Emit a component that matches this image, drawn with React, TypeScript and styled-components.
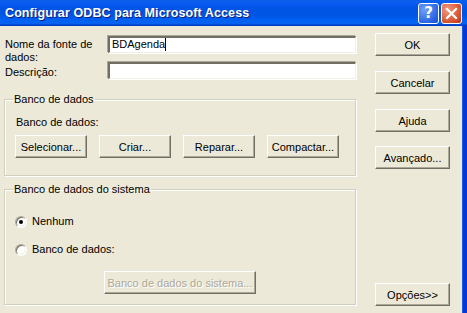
import React from "react";
import styled, { createGlobalStyle, css } from "styled-components";

const Global = createGlobalStyle`
  html, body { margin: 0; padding: 0; background: #ECE9D8; }
  body { font-family: "Liberation Sans", Arial, sans-serif; font-size: 11px; color: #000; }
  * { box-sizing: border-box; }
`;

const Window = styled.div`
  width: 467px;
  height: 313px;
  display: flex;
  flex-direction: column;
  overflow: hidden;
  background: #ECE9D8;
`;

const TitleBar = styled.div`
  height: 26px;
  flex: none;
  display: flex;
  align-items: center;
  padding: 0 5px 0 5px;
  background: linear-gradient(
    to bottom,
    #0A61E8 0%,
    #0A5CF0 10%,
    #0155E6 30%,
    #0054E3 55%,
    #0062F4 80%,
    #0763EE 90%,
    #0046D4 96%,
    #0036B8 100%
  );
`;

const Title = styled.div`
  flex: 1;
  color: #fff;
  font-family: "Liberation Sans", Arial, sans-serif;
  font-weight: bold;
  font-size: 12.5px;
  letter-spacing: 0.1px;
  text-shadow: 1px 1px 0 #0A1E80;
  white-space: nowrap;
`;

const CaptionButton = styled.div<{ $kind: "help" | "close" }>`
  width: 21px;
  height: 21px;
  margin-left: 2px;
  border: 1px solid #fff;
  border-radius: 3px;
  display: flex;
  align-items: center;
  justify-content: center;
  color: #fff;
  font-family: "DejaVu Sans", sans-serif;
  font-weight: bold;
  ${(p) =>
    p.$kind === "help"
      ? css`
          background: radial-gradient(circle at 30% 30%, #6FA0F8, #2A64E4 70%, #1C4FC8);
          font-size: 15px;
        `
      : css`
          background: radial-gradient(circle at 30% 30%, #F09A80, #DA5A36 60%, #B83318);
        `}
`;

const Frame = styled.div`
  flex: 1;
  display: flex;
  border-right: 4px solid #0837D8;
  box-shadow: inset -1px 0 0 #1C5BE6;
`;

const LeftCol = styled.div`
  width: 356px;
  padding-left: 4px;
  display: flex;
  flex-direction: column;
`;

const RightCol = styled.div`
  margin-left: 19px;
  width: 75px;
  padding-top: 7px;
  display: flex;
  flex-direction: column;
`;

const FieldRow = styled.div<{ $top: number }>`
  margin-top: ${(p) => p.$top}px;
  display: flex;
  align-items: flex-start;
`;

const Label = styled.div<{ $pad: number }>`
  width: 104px;
  padding-left: 1px;
  padding-top: ${(p) => p.$pad}px;
  line-height: 13px;
`;

const TextBox = styled.div`
  width: 248px;
  height: 17px;
  background: #fff;
  border-style: solid;
  border-width: 2px 1px 1px 2px;
  border-color: #716F64 #F1EFE2 #F1EFE2 #716F64;
  box-shadow: -1px -1px 0 #ACA899, 1px 1px 0 #fff;
  padding: 0 0 0 2px;
  line-height: 13px;
  white-space: nowrap;
`;

const Caret = styled.span`
  display: inline-block;
  width: 1px;
  height: 13px;
  background: #000;
  vertical-align: top;
`;

const Group = styled.fieldset<{ $top: number; $height: number }>`
  margin: ${(p) => p.$top}px 0 0 0;
  height: ${(p) => p.$height}px;
  padding: 0 0 0 10px;
  border: 1px solid #D0D0BF;
  border-right-color: #D0D0BF;
  min-width: 0;
  position: relative;
  box-shadow: inset 1px 1px 0 #fff, 1px 1px 0 #fff;
`;

const Legend = styled.legend`
  padding: 0 1px 0 1px;
  margin-left: -2px;
  line-height: 13px;
  font-size: 11px;
`;

const Caption = styled.div`
  margin-top: 10px;
  padding-left: 1px;
  line-height: 13px;
`;

const ButtonRow = styled.div`
  margin-top: 6px;
  display: flex;
  gap: 12px;
`;

const Button = styled.div<{ $w?: number; $top?: number; $disabled?: boolean }>`
  width: ${(p) => p.$w ?? 72}px;
  height: 23px;
  margin-top: ${(p) => p.$top ?? 0}px;
  display: flex;
  align-items: center;
  justify-content: center;
  background: #ECE9D8;
  border-style: solid;
  border-width: 1px;
  border-color: #fff #716F64 #716F64 #fff;
  box-shadow: inset -1px -1px 0 #ACA899;
  white-space: nowrap;
  ${(p) =>
    p.$disabled &&
    css`
      color: #ACA899;
      text-shadow: 1px 1px 0 #fff;
    `}
`;

const RadioRow = styled.div<{ $top: number }>`
  margin-top: ${(p) => p.$top}px;
  display: flex;
  align-items: center;
  gap: 5px;
  padding-left: 0px;
  line-height: 13px;
`;

const RadioCircle = styled.div<{ $checked?: boolean }>`
  width: 12px;
  height: 12px;
  border-radius: 50%;
  background: #fff;
  border: 1px solid;
  border-color: #ACA899 #fff #fff #ACA899;
  box-shadow: inset 1px 1px 0 #716F64, inset -1px -1px 0 #F1EFE2;
  display: flex;
  align-items: center;
  justify-content: center;
  &::after {
    content: "";
    width: 4px;
    height: 4px;
    border-radius: 50%;
    background: ${(p) => (p.$checked ? "#000" : "transparent")};
  }
`;

const SysButtonWrap = styled.div`
  margin-top: 15px;
  padding-left: 89px;
`;

export default function App() {
  return (
    <>
      <Global />
      <Window>
        <TitleBar>
          <Title>Configurar ODBC para Microsoft Access</Title>
          <CaptionButton $kind="help">?</CaptionButton>
          <CaptionButton $kind="close">
            <svg width="13" height="13" viewBox="0 0 13 13">
              <path d="M2 2 L11 11 M11 2 L2 11" stroke="#fff" strokeWidth="2.2" strokeLinecap="square" />
            </svg>
          </CaptionButton>
        </TitleBar>
        <Frame>
          <LeftCol>
            <FieldRow $top={10}>
              <Label $pad={2}>
                Nome da fonte de
                <br />
                dados:
              </Label>
              <TextBox>
                BDAgenda<Caret />
              </TextBox>
            </FieldRow>
            <FieldRow $top={-2}>
              <Label $pad={4}>Descrição:</Label>
              <TextBox />
            </FieldRow>
            <Group $top={14} $height={83}>
              <Legend>Banco de dados</Legend>
              <Caption>Banco de dados:</Caption>
              <ButtonRow>
                <Button>Selecionar...</Button>
                <Button>Criar...</Button>
                <Button>Reparar...</Button>
                <Button>Compactar...</Button>
              </ButtonRow>
            </Group>
            <Group $top={7} $height={122}>
              <Legend>Banco de dados do sistema</Legend>
              <RadioRow $top={19}>
                <RadioCircle $checked />
                Nenhum
              </RadioRow>
              <RadioRow $top={15}>
                <RadioCircle />
                Banco de dados:
              </RadioRow>
              <SysButtonWrap>
                <Button $w={152} $disabled>
                  Banco de dados do sistema...
                </Button>
              </SysButtonWrap>
            </Group>
          </LeftCol>
          <RightCol>
            <Button $w={75}>OK</Button>
            <Button $w={75} $top={15}>Cancelar</Button>
            <Button $w={75} $top={15}>Ajuda</Button>
            <Button $w={75} $top={14}>Avançado...</Button>
            <Button $w={75} $top={114}>Opções&gt;&gt;</Button>
          </RightCol>
        </Frame>
      </Window>
    </>
  );
}
